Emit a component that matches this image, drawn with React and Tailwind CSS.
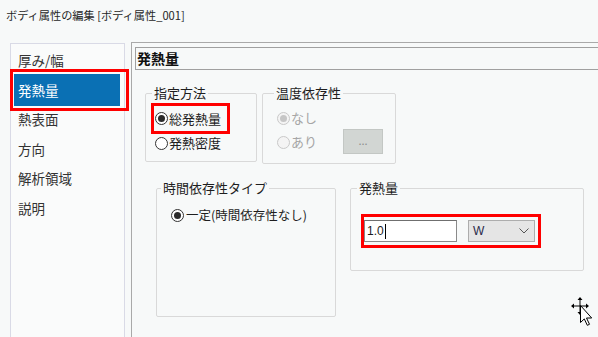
import React from 'react'

const navItems = ['厚み/幅', '発熱量', '熱表面', '方向', '解析領域', '説明']

function Radio({ checked, disabled }) {
  return (
    <span
      className={`w-[13px] h-[13px] rounded-full border flex items-center justify-center shrink-0 ${
        disabled ? 'border-[#c9c9c9] bg-[#f4f4f4]' : 'border-[#333333] bg-white'
      }`}
    >
      {checked && (
        <span className={`w-[7px] h-[7px] rounded-full ${disabled ? 'bg-[#c6c6c6]' : 'bg-[#2b2b2b]'}`} />
      )}
    </span>
  )
}

function MoveCursor() {
  return (
    <svg className="absolute left-[570px] top-[296px]" width="24" height="32" viewBox="0 0 24 32">
      {/* move cross */}
      <path d="M2 10h16M10 2v16" stroke="#000" strokeWidth="1" />
      <path d="M1 10l3-2.5v5zM19 10l-3-2.5v5zM10 1l-2.5 3h5zM10 19l-2.5-3h5z" fill="#000" />
      {/* arrow pointer */}
      <path
        d="M10.5 9.5v17l3.8-3.6 3 6.4 2.2-1-3-6.3h5.2z"
        fill="#fff"
        stroke="#000"
        strokeWidth="1"
        strokeLinejoin="miter"
      />
    </svg>
  )
}

export default function App() {
  return (
    <div className="relative w-[598px] h-[337px] overflow-hidden bg-[#f7f9f9] text-[#1e1e1e] font-['Noto_Sans_CJK_JP','Noto_Sans',sans-serif] flex flex-col">
      <div className="h-[42px] pl-[6px] pt-[7px] text-[11.2px] leading-[16px] text-[#262626]">
        ボディ属性の編集 [ボディ属性_001]
      </div>

      <div className="flex flex-1 min-h-0">
        {/* left navigation */}
        <div className="ml-[10px] mt-[1px] w-[115px] border border-b-0 border-[#d9dae6] bg-[#fafbfb] pt-[1.5px] text-[13.5px] text-[#333333]">
          {navItems.map((item, i) =>
            i === 1 ? (
              <div
                key={item}
                className="relative z-10 ml-[2px] -mt-[3px] -mb-[3.5px] w-[113px] h-[36px] pt-[2px] pl-[1px] outline-[3px] outline-solid outline-[#ff0000]"
              >
                <div className="w-[106px] h-[32px] bg-[#0a70b4] text-white pl-[4px] flex items-center">{item}</div>
              </div>
            ) : (
              <div key={item} className="h-[29.5px] pl-[7px] flex items-center">
                {item}
              </div>
            )
          )}
        </div>

        {/* right panel */}
        <div className="ml-[6px] flex-1 border-l border-t border-[#a9a9a9] flex flex-col">
          <div className="ml-[3px] mt-[4px] h-[23px] border-t border-b border-l border-[#a0a0a0] pl-[1px] text-[14px] leading-[21px] font-bold text-[#111111]">
            発熱量
          </div>

          <div className="ml-[13px] mt-[15px] flex items-start gap-[5px] text-[13px]">
            <fieldset className="w-[112px] h-[77px] border border-[#d9d9d9] rounded-[2px]">
              <legend className="ml-[6px] px-[2px] leading-[16px]">指定方法</legend>
              <div className="ml-[8px] mt-[5px] w-[73px] h-[25px] pl-[1px] flex items-center gap-[1px] outline-[3px] outline-solid outline-[#ff0000]">
                <Radio checked />
                <span className="leading-[16px]">総発熱量</span>
              </div>
              <div className="ml-[9px] h-[24px] flex items-center gap-[1px]">
                <Radio />
                <span className="leading-[16px]">発熱密度</span>
              </div>
            </fieldset>

            <fieldset className="w-[134px] h-[79px] border border-[#d9d9d9] rounded-[2px]">
              <legend className="ml-[11px] px-[2px] leading-[16px]">温度依存性</legend>
              <div className="flex items-start">
                <div className="ml-[14px] mt-[5px] text-[#a6a6a6]">
                  <div className="h-[24px] flex items-center gap-[1px]">
                    <Radio checked disabled />
                    <span className="leading-[16px]">なし</span>
                  </div>
                  <div className="h-[24px] flex items-center gap-[1px]">
                    <Radio disabled />
                    <span className="leading-[16px]">あり</span>
                  </div>
                </div>
                <div className="ml-auto mr-[12px] mt-[28px] w-[40px] h-[25px] bg-[#d2d6d3] border border-[#c3c7c4] flex items-center justify-center text-[11px] text-[#8c8c8c] leading-none pb-[2px]">
                  ...
                </div>
              </div>
            </fieldset>
          </div>

          <div className="ml-[24px] mt-[16px] flex items-start gap-[14px] text-[13px]">
            <fieldset className="w-[180px] h-[137px] border border-[#d9d9d9] rounded-[2px]">
              <legend className="ml-[4px] px-[2px] leading-[16px]">時間依存性タイプ</legend>
              <div className="ml-[14px] mt-[7px] h-[24px] flex items-center gap-[2px] text-[12.5px]">
                <Radio checked />
                <span className="leading-[16px]">一定(時間依存性なし)</span>
              </div>
            </fieldset>

            <fieldset className="w-[234px] h-[91px] border border-[#d9d9d9] rounded-[2px]">
              <legend className="ml-[6px] px-[2px] leading-[16px]">発熱量</legend>
              <div className="ml-[13px] mt-[21px] w-[174px] h-[28px] pt-[3px] flex items-start outline-[3px] outline-solid outline-[#ff0000]">
                <div className="w-[93px] h-[22px] bg-white border border-[#8a8a8a] border-t-[#6f6f6f] flex items-center pl-[2px] font-['Liberation_Sans',sans-serif] text-[12px] text-[#1b1b1b]">
                  1.0<span className="ml-[1px] w-px h-[15px] bg-black" />
                </div>
                <div className="ml-[11px] w-[67px] h-[22px] bg-[#e5e5e5] border border-[#adadad] flex items-center pl-[4px] pr-[5px] font-['Liberation_Sans',sans-serif] text-[12px] text-[#2a2a4a]">
                  <span>W</span>
                  <svg className="ml-auto" width="10" height="6" viewBox="0 0 10 6">
                    <path d="M0.5 0.5L5 5 9.5 0.5" fill="none" stroke="#555" strokeWidth="1" />
                  </svg>
                </div>
              </div>
            </fieldset>
          </div>
        </div>
      </div>

      <MoveCursor />
    </div>
  )
}
